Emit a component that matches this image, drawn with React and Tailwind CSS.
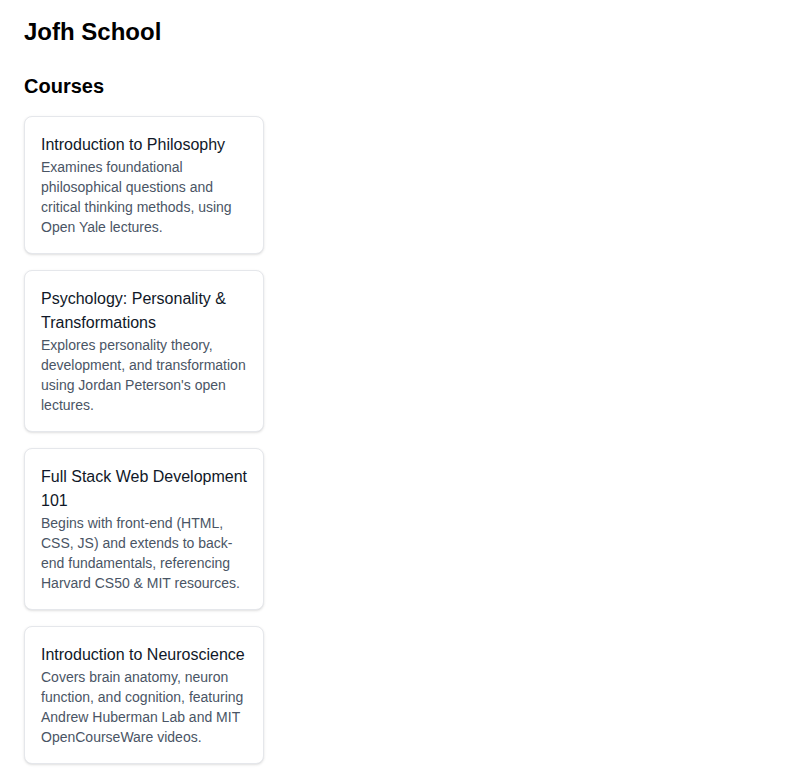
import React from 'react';

const courses = [
  {
    title: 'Introduction to Philosophy',
    description: 'Examines foundational philosophical questions and critical thinking methods, using Open Yale lectures.',
  },
  {
    title: 'Psychology: Personality & Transformations',
    description: "Explores personality theory, development, and transformation using Jordan Peterson's open lectures.",
  },
  {
    title: 'Full Stack Web Development 101',
    description: 'Begins with front-end (HTML, CSS, JS) and extends to back-end fundamentals, referencing Harvard CS50 & MIT resources.',
  },
  {
    title: 'Introduction to Neuroscience',
    description: 'Covers brain anatomy, neuron function, and cognition, featuring Andrew Huberman Lab and MIT OpenCourseWare videos.',
  },
];

const App = () => {
  return (
    <div className="min-h-screen bg-white px-6 pt-4 pb-6 font-['Liberation_Sans',Arial,sans-serif] text-black">
      <h1 className="text-2xl font-bold mb-6">Jofh School</h1>

      <h2 className="text-xl font-bold mb-4">Courses</h2>

      <div className="flex flex-col gap-4">
        {courses.map(course => (
          <div key={course.title} className="w-60 rounded-lg border border-gray-200 bg-white p-4 shadow-sm">
            <h3 className="text-base leading-6 text-gray-900">{course.title}</h3>
            <p className="text-sm leading-5 text-gray-600">{course.description}</p>
          </div>
        ))}
      </div>
    </div>
  );
};

export default App;
